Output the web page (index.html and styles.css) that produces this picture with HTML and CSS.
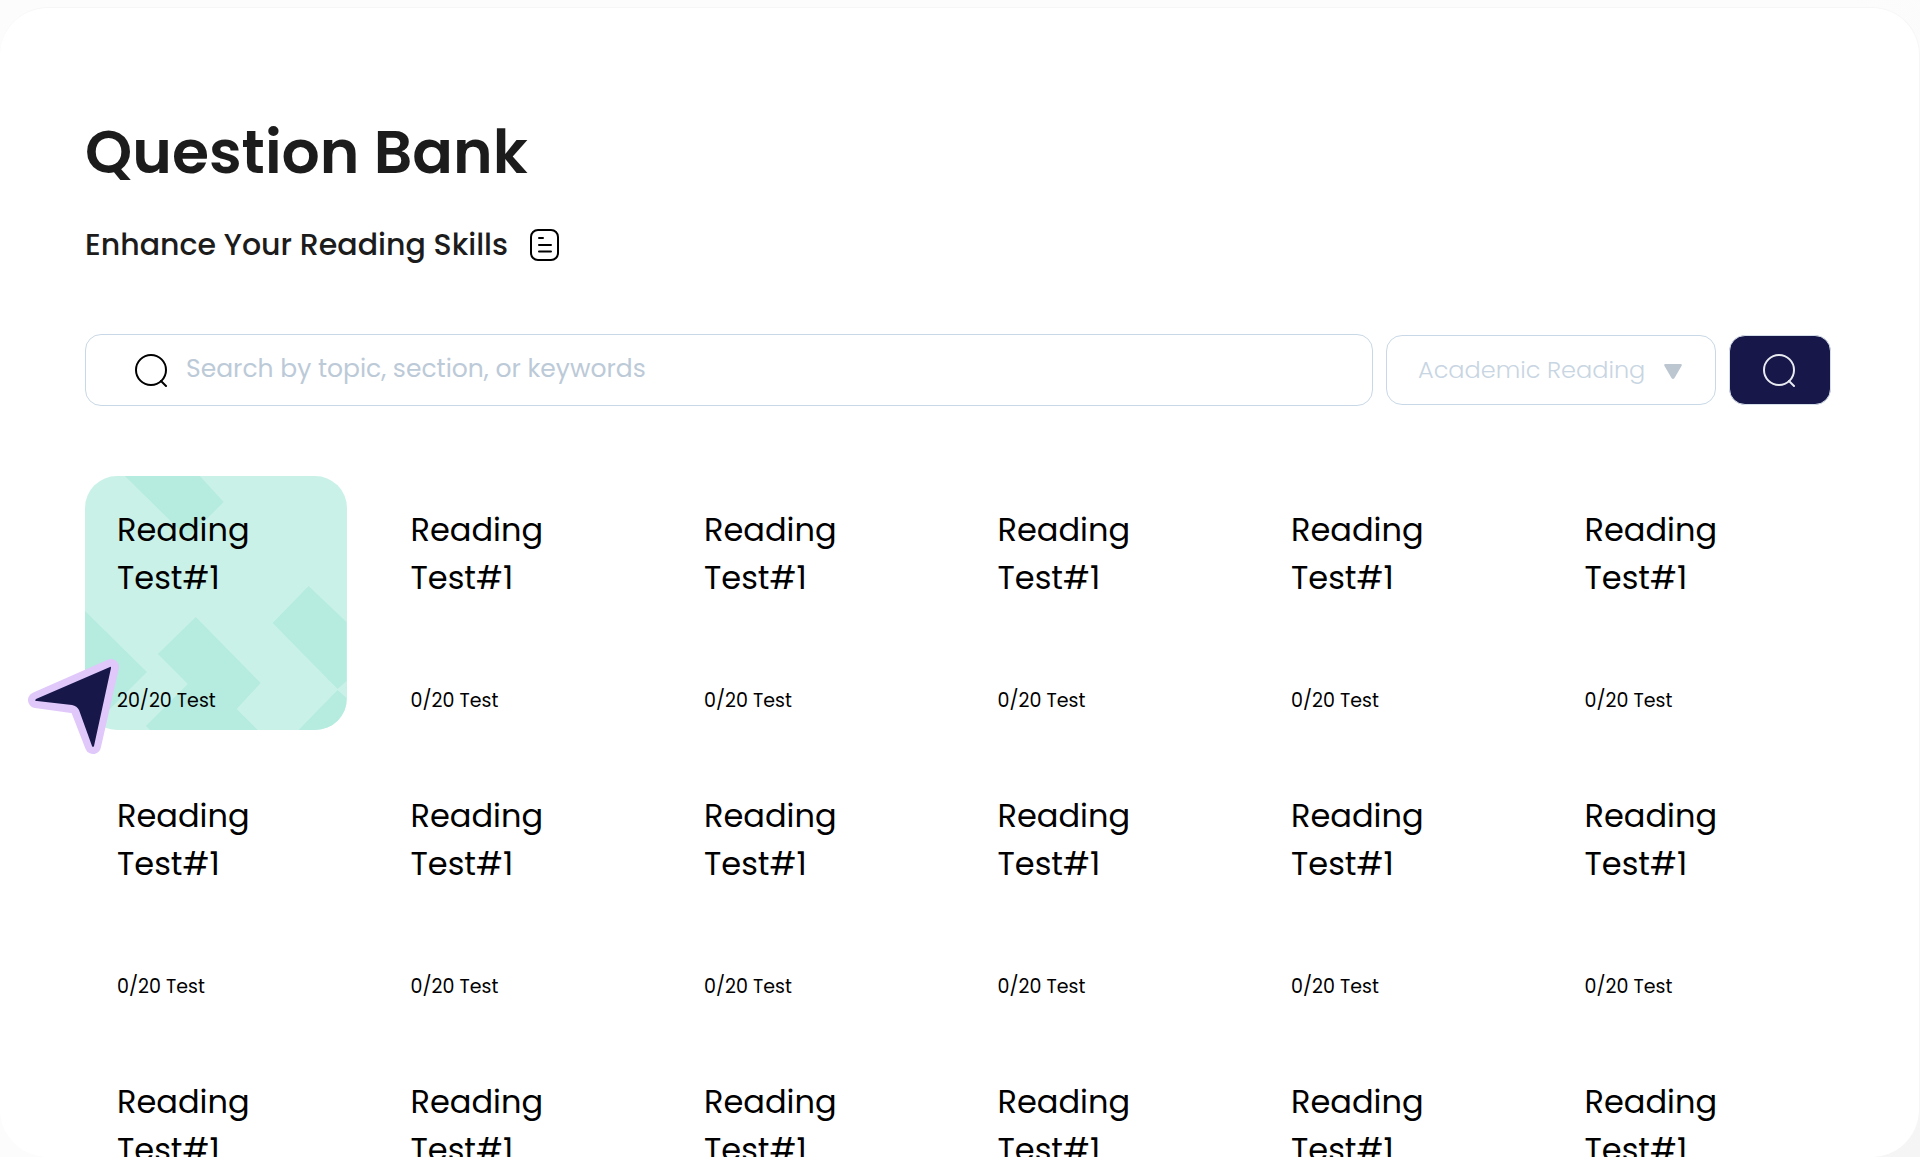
FILE: index.html
```html
<!DOCTYPE html>
<html lang="en">
<head>
  <meta charset="UTF-8">
  <meta name="viewport" content="width=device-width, initial-scale=1.0">
  <title>Question Bank</title>
  <link rel="stylesheet" href="styles.css">
</head>
<body>

  <main class="board">
    <header class="heading">
      <h1>Question Bank</h1>
      <div class="subtitle">
        <h2>Enhance Your Reading Skills</h2>
        <svg width="30" height="34" viewBox="0 0 30 34" fill="none" stroke="#000" stroke-width="2" stroke-linecap="round" aria-hidden="true">
          <rect x="1" y="2" width="27" height="30" rx="7"/>
          <path d="M9 10h4M9 17h12M9 23.500h12"/>
        </svg>
      </div>
    </header>

    <form class="search">
      <label class="search-box">
        <svg width="34" height="34" viewBox="0 0 34 34" fill="none" stroke="#000" stroke-width="2" stroke-linecap="round" aria-hidden="true">
          <circle cx="17" cy="17" r="15"/>
          <path d="M27 28l5 5"/>
        </svg>
        <input type="text" name="q" placeholder="Search by topic, section, or keywords" aria-label="Search">
      </label>
      <div class="select-box">
        <select name="type" aria-label="Test type">
          <option>Academic Reading</option>
        </select>
        <svg width="20" height="18" viewBox="0 0 20 18" aria-hidden="true">
          <path d="M2.500 1h15q2 0 1 2l-7 12q-1.500 2-3 0l-7-12q-1-2 1-2z" fill="#bcc6d0"/>
        </svg>
      </div>
      <button type="submit" aria-label="Search">
        <svg width="34" height="34" viewBox="0 0 34 34" fill="none" stroke="#e8ebf0" stroke-width="2" stroke-linecap="round" aria-hidden="true">
          <circle cx="16" cy="17" r="15"/>
          <path d="M26 28l5 5"/>
        </svg>
      </button>
    </form>

    <section class="tests">
      <article class="card active">
        <svg class="pattern" viewBox="0 0 262 254" preserveAspectRatio="none" fill="#b5ecdf" aria-hidden="true">
          <path d="M40 0H115L139 26L103 62Z"/>
          <path d="M0 135L62 196L0 258Z"/>
          <path d="M111 141L73 178L103 208L61 250L65 254H173L152 233L176 207Z"/>
          <path d="M224 110L188 147L253 213L262 205V146Z"/>
          <path d="M214 254L253 214L262 222V254Z"/>
        </svg>
        <h3>Reading<br>Test#1</h3>
        <p>20/20 Test</p>
        <svg class="cursor" width="92" height="96" viewBox="0 0 92 96" aria-hidden="true">
          <path d="M83 8L8 41L44 46Q49 47 51 51L65 87Z" fill="#e0c8fb" stroke="#e0c8fb" stroke-width="16" stroke-linejoin="round"/>
          <path d="M82 8L8 40Q6 42 9 42L44 46Q49 47 51 51L64 87Q65 89 66 87L83 9Q83 7 82 8Z" fill="#17174a"/>
        </svg>
      </article>
      <article class="card"><h3>Reading<br>Test#1</h3><p>0/20 Test</p></article>
      <article class="card"><h3>Reading<br>Test#1</h3><p>0/20 Test</p></article>
      <article class="card"><h3>Reading<br>Test#1</h3><p>0/20 Test</p></article>
      <article class="card"><h3>Reading<br>Test#1</h3><p>0/20 Test</p></article>
      <article class="card"><h3>Reading<br>Test#1</h3><p>0/20 Test</p></article>

      <article class="card"><h3>Reading<br>Test#1</h3><p>0/20 Test</p></article>
      <article class="card"><h3>Reading<br>Test#1</h3><p>0/20 Test</p></article>
      <article class="card"><h3>Reading<br>Test#1</h3><p>0/20 Test</p></article>
      <article class="card"><h3>Reading<br>Test#1</h3><p>0/20 Test</p></article>
      <article class="card"><h3>Reading<br>Test#1</h3><p>0/20 Test</p></article>
      <article class="card"><h3>Reading<br>Test#1</h3><p>0/20 Test</p></article>

      <article class="card"><h3>Reading<br>Test#1</h3></article>
      <article class="card"><h3>Reading<br>Test#1</h3></article>
      <article class="card"><h3>Reading<br>Test#1</h3></article>
      <article class="card"><h3>Reading<br>Test#1</h3></article>
      <article class="card"><h3>Reading<br>Test#1</h3></article>
      <article class="card"><h3>Reading<br>Test#1</h3></article>
    </section>
  </main>

</body>
</html>
```
FILE: styles.css
```css
* {
  box-sizing: border-box;
}

body {
  margin: 0;
  height: 100vh;
  padding-top: 7px;
  overflow: hidden;
  background: linear-gradient(135deg, #fcfcfc 60%, #f5f5f5);
  font-family: Poppins, Inter, sans-serif;
  color: #000;
}

h1, h2, h3, p {
  margin: 0;
}

.board {
  height: 100%;
  padding: 96px 88px 0 85px;
  overflow: hidden;
  background: #fff;
  border: 1px solid #f6f6f6;
  border-left: none;
  border-bottom: none;
  border-radius: 48px;
}

.heading {
  color: #1c1c1c;
}

h1 {
  font-size: 60px;
  font-weight: 600;
  line-height: 96px;
}

.subtitle {
  display: flex;
  align-items: center;
  gap: 22px;
  margin-top: 21px;
}

h2 {
  font-size: 30px;
  font-weight: 500;
  line-height: 48px;
}

/* search row */
.search {
  display: flex;
  align-items: center;
  gap: 13px;
  margin-top: 65px;
}

.search-box {
  flex: 1;
  display: flex;
  align-items: center;
  gap: 18px;
  height: 72px;
  padding: 0 48px;
  border: 1px solid #c9d8e6;
  border-radius: 16px;
}

.search-box input {
  flex: 1;
  min-width: 0;
  padding: 0 0 2px;
  border: none;
  outline: none;
  background: none;
  font: 400 25px Poppins, Inter, sans-serif;
}

.search-box input::placeholder {
  color: #bccad8;
  opacity: 1;
}

.select-box {
  position: relative;
  width: 330px;
}

.select-box select {
  appearance: none;
  display: block;
  width: 100%;
  height: 70px;
  padding: 0 56px 2px 31px;
  border: 1px solid #c9d8e6;
  border-radius: 16px;
  background: #fff;
  font: 300 24px Poppins, Inter, sans-serif;
  color: #c8d5e2;
}

.select-box svg {
  position: absolute;
  top: 28px;
  right: 33px;
  pointer-events: none;
}

.search button {
  display: flex;
  align-items: center;
  justify-content: center;
  width: 102px;
  height: 70px;
  padding: 0;
  border: 1px solid #d5dfe9;
  border-radius: 16px;
  background: #17174a;
  cursor: pointer;
}

/* test cards */
.tests {
  display: grid;
  grid-template-columns: repeat(6, 1fr);
  gap: 32px;
  margin: 70px 17px 0 0;
}

.card {
  position: relative;
  display: flex;
  flex-direction: column;
  justify-content: space-between;
  min-height: 254px;
  padding: 30px 32px 13px;
  border-radius: 32px;
}

.card h3 {
  position: relative;
  font-size: 32px;
  font-weight: 400;
  line-height: 48px;
}

.card p {
  position: relative;
  font-size: 19px;
  line-height: 32px;
}

.card.active {
  background: #caf1e8;
}

.pattern {
  position: absolute;
  top: 0;
  left: 0;
  width: 100%;
  height: 100%;
  border-radius: 32px;
}

.cursor {
  position: absolute;
  left: -57px;
  top: 183px;
}
```
